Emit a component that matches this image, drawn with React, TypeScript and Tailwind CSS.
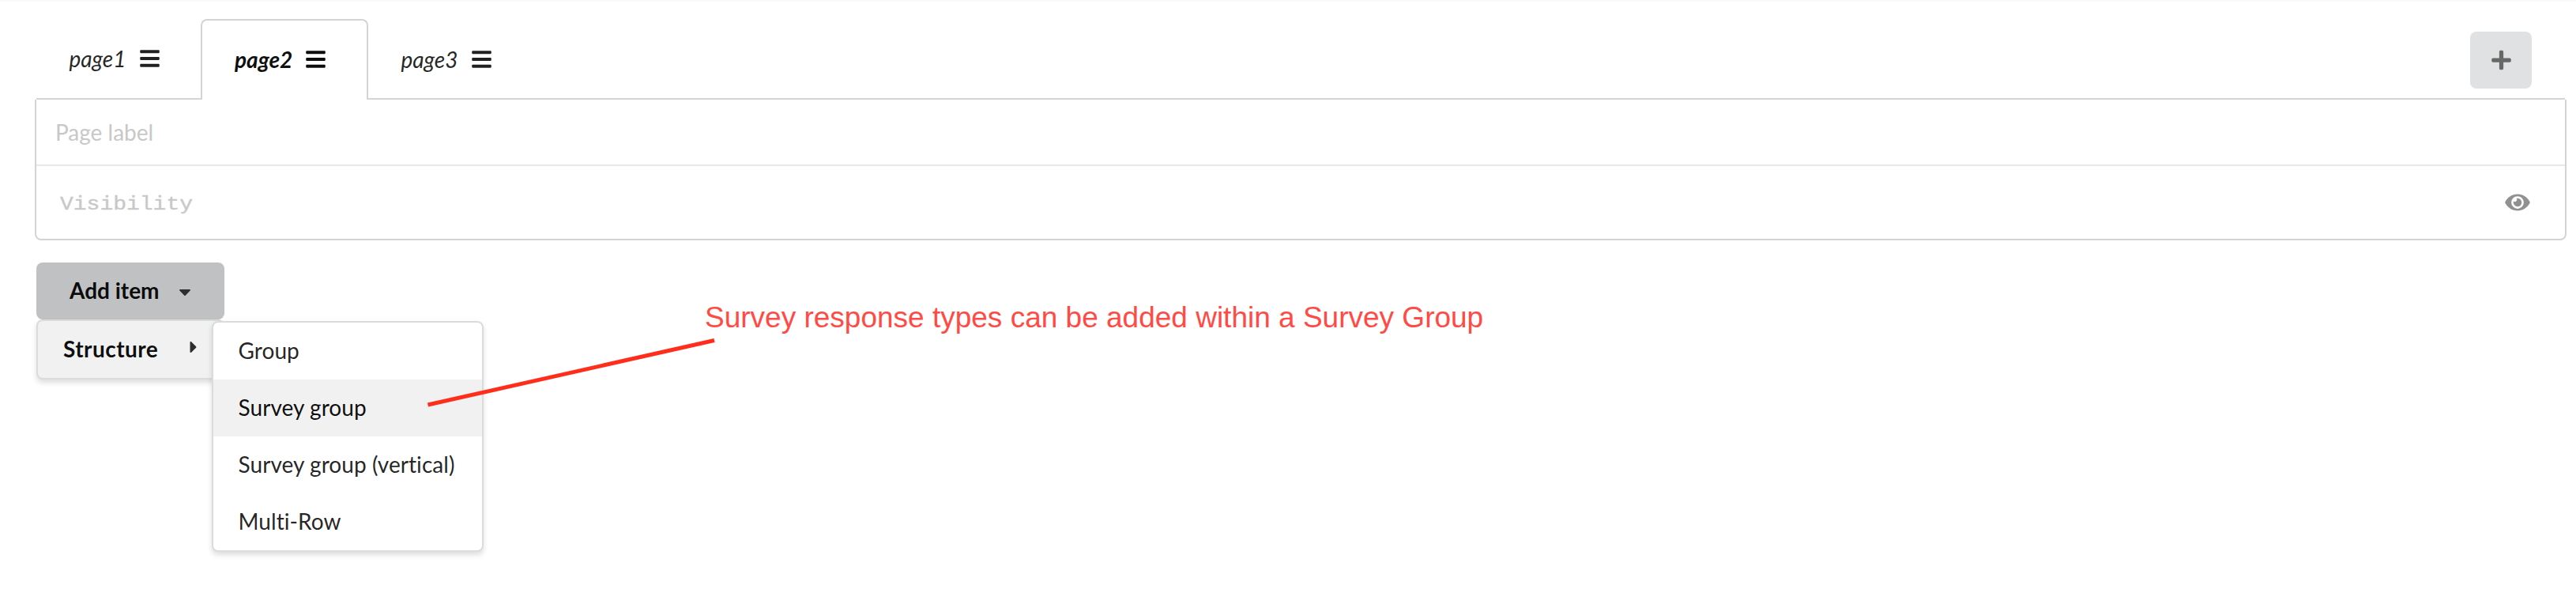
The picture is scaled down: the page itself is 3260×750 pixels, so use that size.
import React from "react";
import { FaBars, FaCaretDown, FaCaretRight, FaEye, FaPlus } from "react-icons/fa";

type TabProps = { label: string; active?: boolean };

function Tab({ label, active }: TabProps) {
  return (
    <div
      className={
        active
          ? "relative flex h-[102px] w-[212px] items-center rounded-t-[8px] border-2 border-b-0 border-[#d4d4d5] bg-white pb-[2px] pl-[41px] font-bold text-black/95"
          : "flex h-[102px] items-center pl-[41.5px] text-black/87"
      }
    >
      <span className={active ? "w-[90px] italic" : "w-[89px] italic"}>{label}</span>
      <FaBars className="h-[28px] w-[25px]" />
    </div>
  );
}

const menuItems = ["Group", "Survey group", "Survey group (vertical)", "Multi-Row"];

export default function App() {
  return (
    <div className="relative h-[750px] w-[3260px] overflow-hidden bg-white pl-[44px] pt-[24px] font-['Lato',sans-serif] text-[28px] leading-[32px] text-black/87 shadow-[inset_0_2px_1px_0_#fafafa] [font-variant-ligatures:none]">
      <div className="flex h-[102px] w-[3204px] items-start">
        <div className="ml-[2px] flex h-[102px] w-[208px] shrink-0 flex-col border-b-2 border-[#d4d4d5]">
          <Tab label="page1" />
        </div>
        <Tab label="page2" active />
        <div className="mr-[2px] flex h-[102px] grow items-start justify-between border-b-2 border-[#d4d4d5] pr-[42px]">
          <Tab label="page3" />
          <button className="mt-[16px] flex h-[72px] w-[78px] items-center justify-center rounded-[8px] bg-[#e0e1e2] text-[#666767]">
            <FaPlus className="h-[28px] w-[25px]" />
          </button>
        </div>
      </div>

      <div className="h-[178px] w-[3204px] rounded-b-[8px] border-2 border-t-0 border-[#d4d4d5] bg-white">
        <div className="flex h-[84px] items-center border-b-2 border-[#e8e8e8] pb-[1px] pl-[24px] text-[#c8c8c8]">
          Page label
        </div>
        <div className="flex h-[92px] items-center justify-between pl-[30px] pr-[44px]">
          <span className="mt-[4px] origin-[0_75%] scale-y-[0.87] font-['Liberation_Mono',monospace] text-[28px] text-[#c8c8c8] [-webkit-text-stroke:0.4px_#c8c8c8]">Visibility</span>
          <FaEye className="mb-[1px] h-[28px] w-[32px] text-[#919191]" />
        </div>
      </div>

      <div className="ml-[2px] mt-[28px] flex w-[238px] flex-col">
        <button className="flex h-[72px] items-center rounded-[8px] bg-[#c0c1c2] pl-[42px] font-bold text-black/95">
          <span className="w-[138px] pb-[2px] text-left">Add item</span>
          <FaCaretDown className="mt-[2px] h-[24px] w-[16px] text-[#2d2e2e]" />
        </button>
        <div className="flex h-[76px] items-center rounded-[8px] border-2 border-[#dadbdc] bg-[#f1f1f1] pl-[32px] font-bold text-black/95 shadow-[0_4px_6px_0_rgba(34,36,38,0.15)]">
          <span className="w-[157px] pb-[2px] tracking-[0.45px]">Structure</span>
          <FaCaretRight className="mb-[6px] h-[24px] w-[16px] text-[#2d2e2e]" />
        </div>
      </div>

      <div className="absolute left-[268px] top-[406px] flex w-[344px] flex-col rounded-[8px] border-2 border-[#dadbdc] bg-white tracking-[0.06px] shadow-[0_4px_6px_0_rgba(34,36,38,0.15)]">
        {menuItems.map((item) => (
          <div
            key={item}
            className={
              item === "Survey group"
                ? "flex h-[72px] items-center bg-[#f1f1f1] pb-[2px] pl-[31.5px] text-black/95"
                : "flex h-[72px] items-center pb-[2px] pl-[31.5px]"
            }
          >
            {item}
          </div>
        ))}
      </div>

      <svg className="absolute left-[530px] top-[420px]" width="390" height="104" viewBox="530 420 390 104">
        <line x1="541.5" y1="512" x2="904" y2="430.5" stroke="#ff2d1c" strokeWidth="5" />
      </svg>
      <div className="absolute left-[892px] top-[380px] whitespace-nowrap font-['Liberation_Sans',sans-serif] text-[37px] leading-[44px] text-[#ff4a45]">
        Survey response types can be added within a Survey Group
      </div>
    </div>
  );
}
